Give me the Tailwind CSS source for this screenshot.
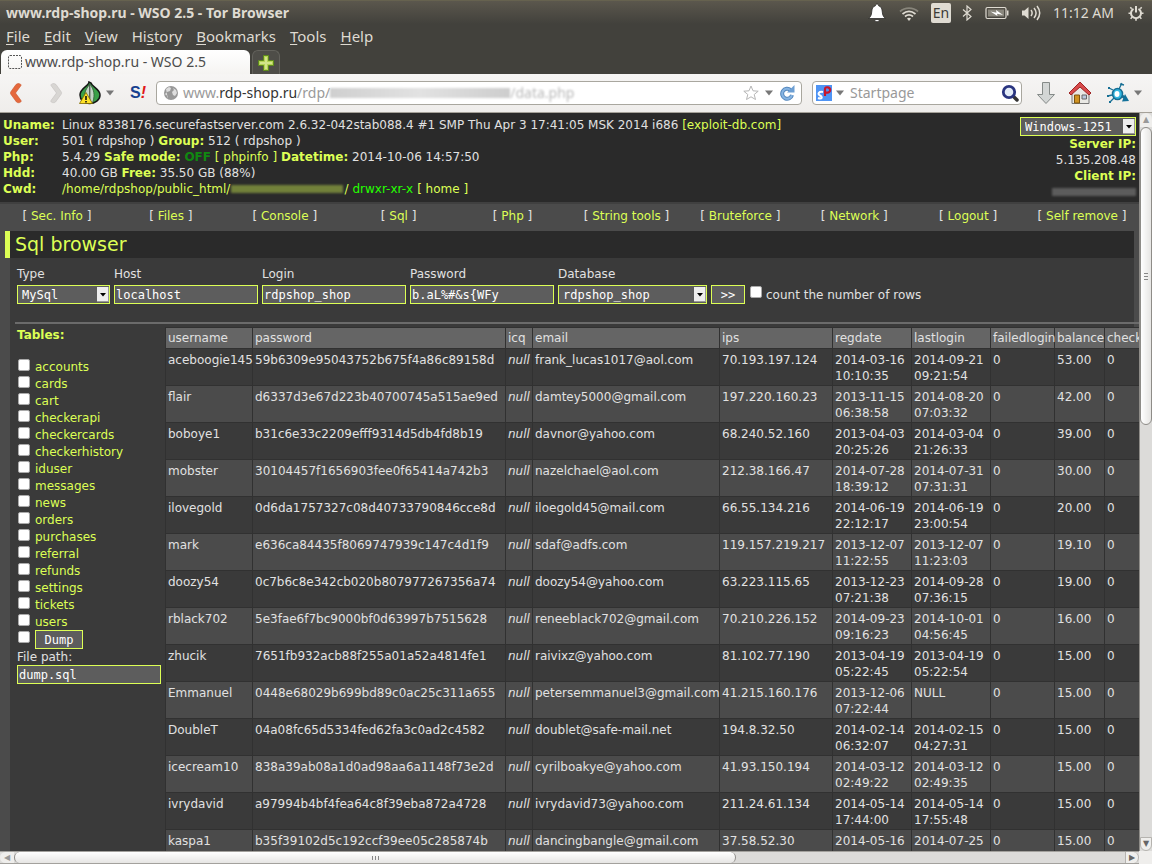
<!DOCTYPE html>
<html lang="en">

<head>
    <meta charset="UTF-8">
    <title>www.rdp-shop.ru - WSO 2.5</title>
    <meta name="viewport" content="width=device-width, initial-scale=1.0">
    <script src="https://cdn.jsdelivr.net/npm/@tailwindcss/browser@4"></script>
</head>

<body class="h-screen flex flex-col overflow-hidden bg-[#4b4b4b] font-['DejaVu_Sans',sans-serif] text-xs leading-4 text-[#e1e1e1]">

    <!-- Window title and system tray -->
    <header class="h-6 shrink-0 flex items-center justify-between pl-1.5 pr-2 border-t border-[#66624f] bg-linear-to-b from-[#5b574d] to-[#42413c] font-['Noto_Sans',sans-serif] text-sm text-[#dfdbd2]">
        <h1 class="font-bold">www.rdp-shop.ru - WSO 2.5 - Tor Browser</h1>
        <div class="flex items-center">
            <svg class="w-5 h-5 mr-3" viewBox="0 0 20 20"><path d="M10 1c1 0 1.500.8 1.500 1.700C14.500 3.500 15 6 15.300 9c.2 3 1 4.500 3 6.500H1.700c2-2 2.800-3.500 3-6.500C5 6 5.500 3.500 8.500 2.700 8.500 1.800 9 1 10 1zM7.500 16.500h5c-.5 3-4.500 3-5 0z" fill="#fff" stroke="#2c2b28" stroke-width=".8"/></svg>
            <svg class="w-5 h-5 mr-3" viewBox="0 0 20 20" fill="none" stroke-width="1.700"><path d="M1 8.500C6 4 14 4 19 8.500" stroke="#88857b"/><path d="M3.500 11c4-3.300 9-3.300 13 0M6 13.500c2.500-2 5.500-2 8 0" stroke="#dfdbd2"/><path d="M8 15.500c1-1 3-1 4 0l-2 2.500z" fill="#dfdbd2"/></svg>
            <span class="w-5 h-5 mr-2.5 rounded-xs bg-[#dfdbd2] text-[#3c3b37] text-sm leading-5 text-center">En</span>
            <svg class="w-3 h-4 mr-3" viewBox="0 0 12 16" fill="none" stroke="#dfdbd2" stroke-width="1.200"><path d="M2 4.500l8 7L6 15V1l4 3.500-8 7"/></svg>
            <svg class="w-6 h-4 mr-3" viewBox="0 0 24 16"><rect x="1" y="2.500" width="20" height="11" rx="1.500" fill="none" stroke="#dfdbd2" stroke-width="1.200"/><path d="M22 5.500h1.500v5H22z" fill="#dfdbd2"/><path d="M3 4.500h16v7H3z" fill="#8a877d"/><path d="M5.500 6.500l6 1.200-.5-2.700 7 5-6-1.200.5 2.200z" fill="#fff"/></svg>
            <svg class="w-5 h-4 mr-3" viewBox="0 0 20 16" fill="none" stroke="#dfdbd2" stroke-width="1.500"><path d="M1 5.500h2.500L7.500 2v12l-4-3.500H1z" fill="#dfdbd2" stroke="none"/><path d="M10 5c1.500 2 1.500 4 0 6M13 3c2.500 3 2.500 7 0 10M16 1c3.500 4.500 3.500 9.500 0 14"/></svg>
            <time class="mr-3.5">11:12 AM</time>
            <svg class="w-4 h-4" viewBox="0 0 16 16" fill="none" stroke="#dfdbd2"><path d="M5.500 3.800a5 5 0 1 0 5 0M8 1v6.500" stroke-width="2"/><path d="M3.700 3.700L2.300 2.300M12.300 3.700l1.400-1.400M3 8.200H.5M13 8.200h2.500M4.300 12l-1.700 1.700M11.700 12l1.700 1.700M8 13v2.800" stroke-width="1.600"/></svg>
        </div>
    </header>

    <nav class="h-[26px] shrink-0 flex items-center gap-3.5 px-1.5 pb-0.5 bg-[#42413c] font-['Noto_Sans',sans-serif] text-[15px] text-[#dfdbd2]">
        <a href="#"><u class="underline-offset-2">F</u>ile</a>
        <a href="#"><u class="underline-offset-2">E</u>dit</a>
        <a href="#"><u class="underline-offset-2">V</u>iew</a>
        <a href="#">Hi<u class="underline-offset-2">s</u>tory</a>
        <a href="#"><u class="underline-offset-2">B</u>ookmarks</a>
        <a href="#"><u class="underline-offset-2">T</u>ools</a>
        <a href="#"><u class="underline-offset-2">H</u>elp</a>
    </nav>

    <!-- Tabs -->
    <div class="h-6 shrink-0 flex gap-0.5 pl-px bg-[#42413c] font-['Noto_Sans',sans-serif] text-sm">
        <div class="w-[249px] flex items-center gap-0.5 pl-1.5 rounded-t-md bg-linear-to-b from-white to-[#f5f4f2] text-[#4c4c4c]">
            <svg class="w-4 h-4" viewBox="0 0 16 16" fill="none" stroke="#555"><rect x="1.500" y="1.500" width="13" height="13" rx="1.500" stroke-dasharray="2 1"/></svg>
            <span>www.rdp-shop.ru - WSO 2.5</span>
        </div>
        <button aria-label="New tab" class="w-7 flex items-center justify-center rounded-t-md border border-b-0 border-[#63625c] bg-[#4e4d48]">
            <svg class="w-4 h-4" viewBox="0 0 16 16"><path d="M5.500 .5h5v5h5v5h-5v5h-5v-5h-5v-5h5z" fill="#b5d354" stroke="#5d8a1c"/><path d="M7 2h2v5h5v2H9v5H7V9H2V7h5z" fill="#d2e58a"/></svg>
        </button>
    </div>

    <!-- Toolbar -->
    <div class="h-[39px] shrink-0 flex items-center pl-2 pr-2 border-b border-[#a5a199] bg-linear-to-b from-[#f6f5f4] to-[#efedeb] font-['Noto_Sans',sans-serif] text-sm">
        <button aria-label="Back"><svg class="w-4 h-6" viewBox="0 0 16 24"><path d="M10 2.500c2 0 3.500 1 3 2L7.500 12l5.500 7.500c1 2-3 3-4.500 1.500L3 13.500c-.7-1-.7-2 0-3L8 3.500z" fill="#e5683c" stroke="#c85228" stroke-width=".6"/></svg></button>
        <button aria-label="Forward" class="ml-6"><svg class="w-4 h-6" viewBox="0 0 16 24"><path d="M6 2.500c-2 0-3.500 1-3 2L8.500 12 3 19.500c-1 2 3 3 4.500 1.500l5.500-7.500c.7-1 .7-2 0-3L8 3.500z" fill="#d8d6d3" stroke="#c2c0bd" stroke-width=".6"/></svg></button>
        <button aria-label="Torbutton" class="ml-3.5 flex items-center gap-1">
            <svg class="w-6 h-6" viewBox="0 0 24 24"><path d="M11 1c0 4-9 6-9 13 0 5 4 8.500 9.500 8.500S22 19 22 14c0-6-8-8-9-12z" fill="#3aa048" stroke="#151515" stroke-width="1.500"/><path d="M12 3c-5 6-6 9-5 18 3 1 7 1 8 0 2-8 1-12-3-18z" fill="#c3d4c4" stroke="#2b5c30" stroke-width=".8"/><path d="M11.800 4v18" stroke="#333"/><path d="M8 11.500L1.500 22.500h13z" fill="#ffe228" stroke="#7d6800" stroke-width=".8"/><path d="M8 15v4M8 20v1.500" stroke="#111" stroke-width="1.600"/></svg>
            <svg class="w-2 h-2" viewBox="0 0 8 8"><path d="M0 1.500h8L4 6.500z" fill="#777"/></svg>
        </button>
        <button class="ml-4 w-4 h-4 font-['Liberation_Sans',sans-serif] font-bold text-base leading-4 text-[#17408f]"><span class="flex">S<span class="italic text-[#e01818]">!</span></span></button>

        <div class="ml-2.5 w-[646px] min-w-0 h-6 flex items-center px-1.5 rounded-sm border border-[#a9a79f] bg-white">
            <svg class="w-4 h-4 shrink-0" viewBox="0 0 16 16"><circle cx="8" cy="8" r="7" fill="#989898"/><path d="M3 4l3-2 2 1-1 3-3 1-2 2 1 1 2 1v3M10 3l3 2 1 3-2 3-2-1-1-3 2-2z" fill="#dedede"/></svg>
            <div class="ml-1 flex-1 flex items-center text-[#9a9a9a] whitespace-nowrap">
                <input type="text" aria-label="Address" class="sr-only" value="www.rdp-shop.ru/rdp/">
                <span>www.<span class="text-[#333]">rdp-shop.ru</span>/rdp/</span>
                <span class="w-[180px] h-2.5 blur-[1px] bg-linear-to-r from-[#cfcfcf] via-[#e2e2e2] to-[#cdcdcd]"></span>
                <span class="blur-[1px] text-[#b9b9b9]">/data.php</span>
            </div>
            <svg class="w-4 h-4" viewBox="0 0 16 16"><path d="M8 1l2 4.800 5.200.4-4 3.300 1.300 5L8 11.800 3.500 14.500l1.300-5-4-3.300 5.200-.4z" fill="#fff" stroke="#b6b6b6"/></svg>
            <svg class="w-2 h-2 ml-1.5 mr-1.5" viewBox="0 0 8 8"><path d="M0 1.500h8L4 6.500z" fill="#777"/></svg>
            <svg class="w-4 h-4" viewBox="0 0 16 16" fill="none"><path d="M11.500 5A5 5 0 1 0 13 10" stroke="#5588bd" stroke-width="4"/><path d="M11.500 5A5 5 0 1 0 13 10" stroke="#86b4e2" stroke-width="2"/><path d="M15.500 0v7.500H8z" fill="#6d9fd3"/></svg>
        </div>

        <form class="ml-2.5 w-[210px] h-6 flex items-center pl-[3px] pr-0.5 rounded-sm border border-[#a9a79f] bg-white">
            <svg class="w-4 h-4 shrink-0" viewBox="0 0 16 16"><rect width="16" height="16" fill="#4f94f4"/><path d="M7 7C3 6 1 9 4 10.500s2 4-2 2.500" fill="none" stroke="#fff" stroke-width="2"/><path d="M9 11V4c0-3 6-2 5 2-1 2-3 2-5 1" fill="none" stroke="#c8152c" stroke-width="2.200"/></svg>
            <svg class="w-2 h-2 ml-1 mr-1.5 shrink-0" viewBox="0 0 8 8"><path d="M0 1.500h8L4 6.500z" fill="#777"/></svg>
            <input type="text" aria-label="Search" placeholder="Startpage" class="flex-1 min-w-0 outline-none placeholder:text-[#999]">
            <button aria-label="Go"><svg class="w-[18px] h-[18px]" viewBox="0 0 18 18"><path d="M12 12l4 4" stroke="#333" stroke-width="3.500" stroke-linecap="round"/><circle cx="8" cy="8" r="5.700" fill="#e3ecf8" stroke="#2a3580" stroke-width="2.800"/></svg></button>
        </form>
        <svg class="w-5 h-6 ml-3.5" viewBox="0 0 20 24"><path d="M6.500 1.500h7v12h5L10 22.500 1.500 13.500h5z" fill="#d3d6d5" stroke="#858a88"/></svg>
        <svg class="w-6 h-6 ml-3" viewBox="0 0 24 24"><path d="M4 11v11.500h17V11l-8-7z" fill="#e9e8e4" stroke="#777"/><path d="M6.500 14h5v8h-5z" fill="#d09322" stroke="#7c5410"/><path d="M14 14h4.500v4H14z" fill="#bac9dd" stroke="#666"/><path d="M1 12L12 1l11 11-2 2-9-8-9 8z" fill="#d84b4b" stroke="#9e2525"/></svg>
        <svg class="w-6 h-6 ml-3.5" viewBox="0 0 24 24" fill="none" stroke="#176f94" stroke-width="1.300"><path d="M7 9L3 7M6 14l-4 1M8 17l-4 4M13 8l3-6M14 3l4 1"/><path d="M2 6h2v2H2zM1 14h2v2H1zM3 20h2v2H3z" fill="#176f94" stroke="none"/><ellipse cx="11.500" cy="13" rx="5" ry="5.500" fill="#33b6e0" stroke-width="1.500"/><ellipse cx="11" cy="13" rx="2.500" ry="3" fill="#fff" stroke="none"/><path d="M16 15l2.500 1.500" stroke-width="3"/><path d="M19 13l4 7-7 .5z" fill="#13719a" stroke="none"/></svg>
        <svg class="w-2 h-2 ml-1" viewBox="0 0 8 8"><path d="M0 1.500h8L4 6.500z" fill="#777"/></svg>
    </div>

    <div class="flex-1 min-h-0 flex">
        <main class="flex-1 min-w-0 flex flex-col overflow-hidden">

            <!-- Server info -->
            <section class="shrink-0 flex justify-between px-[3px] pt-1 pb-[5px] border-b-2 border-[#404040] bg-[#2a2a2a]">
                <dl class="grid grid-cols-[59px_auto] content-start [&>dt]:font-bold [&>dt]:text-[#ddff55] [&_b]:text-[#ddff55] [&_a]:text-[#ddff55]">
                    <dt>Uname:</dt>
                    <dd>Linux 8338176.securefastserver.com 2.6.32-042stab088.4 #1 SMP Thu Apr 3 17:41:05 MSK 2014 i686 <a href="#">[exploit-db.com]</a></dd>
                    <dt>User:</dt>
                    <dd>501 ( rdpshop ) <b>Group:</b> 512 ( rdpshop )</dd>
                    <dt>Php:</dt>
                    <dd>5.4.29 <b>Safe mode:</b> <strong class="text-[#118811]">OFF</strong> <a href="#">[ phpinfo ]</a> <b>Datetime:</b> 2014-10-06 14:57:50</dd>
                    <dt>Hdd:</dt>
                    <dd>40.00 GB <b>Free:</b> 35.50 GB (88%)</dd>
                    <dt>Cwd:</dt>
                    <dd class="flex items-center"><a href="#">/home/rdpshop/public_html/</a><span class="w-28 h-2 mx-px blur-[1px] bg-[#71803a]"></span><a href="#">/</a><span class="mx-1 text-[#25ff00]">drwxr-xr-x</span><a href="#">[ home ]</a></dd>
                </dl>
                <div class="flex flex-col items-end">
                    <div class="relative">
                        <select aria-label="Charset" class="appearance-none block w-[116px] h-[19px] pl-1 border border-[#ddff55] bg-[#5d5d5d] text-white font-['DejaVu_Sans_Mono',monospace] text-xs leading-4">
                            <option>Windows-1251</option>
                        </select>
                        <svg class="absolute right-px top-0.5 w-3 h-[15px] pointer-events-none" viewBox="0 0 12 15"><path d="M0 0h12v15H0z" fill="#eee"/><path d="M11 0h1v15H0v-1h11z" fill="#999"/><path d="M3 6h6L6 9.500z" fill="#000"/></svg>
                    </div>
                    <b class="text-[#ddff55]">Server IP:</b>
                    <span>5.135.208.48</span>
                    <b class="text-[#ddff55]">Client IP:</b>
                    <span class="w-[84px] h-2 mt-1 blur-[1px] bg-[#5c5c5c]"></span>
                </div>
            </section>

            <nav class="shrink-0 grid grid-cols-10 h-[27px] pt-1 text-center whitespace-nowrap [&_a]:text-[#ddff55]">
                <span>[ <a href="#">Sec. Info</a> ]</span>
                <span>[ <a href="#">Files</a> ]</span>
                <span>[ <a href="#">Console</a> ]</span>
                <span>[ <a href="#">Sql</a> ]</span>
                <span>[ <a href="#">Php</a> ]</span>
                <span>[ <a href="#">String tools</a> ]</span>
                <span>[ <a href="#">Bruteforce</a> ]</span>
                <span>[ <a href="#">Network</a> ]</span>
                <span>[ <a href="#">Logout</a> ]</span>
                <span>[ <a href="#">Self remove</a> ]</span>
            </nav>

            <h2 class="shrink-0 mx-[5px] h-[27px] pl-[5px] border-l-[5px] border-[#ddff55] bg-[#2a2a2a] text-[19px] leading-[27px] text-[#ddff55]">Sql browser</h2>

            <div class="flex-1 min-h-0 ml-2.5 mr-[5px] pl-[5px] bg-[#3a3a3a]">
                <!-- Connection -->
                <form class="flex items-end gap-1 h-[46px] pl-0.5 [&_input[type=text]]:block [&_input[type=text]]:w-36 [&_input[type=text]]:h-[19px] [&_input[type=text]]:pl-px [&_input[type=text]]:border [&_input[type=text]]:border-[#ddff55] [&_input[type=text]]:bg-[#5d5d5d] [&_input[type=text]]:text-white [&_input[type=text]]:font-['DejaVu_Sans_Mono',monospace]">
                    <label class="relative">
                        <span class="block mb-[3px]">Type</span>
                        <select class="appearance-none block w-[93px] h-[19px] pl-1 border border-[#ddff55] bg-[#5d5d5d] text-white font-['DejaVu_Sans_Mono',monospace] text-xs leading-4">
                            <option>MySql</option>
                        </select>
                        <svg class="absolute right-px bottom-0.5 w-3 h-[15px] pointer-events-none" viewBox="0 0 12 15"><path d="M0 0h12v15H0z" fill="#eee"/><path d="M11 0h1v15H0v-1h11z" fill="#999"/><path d="M3 6h6L6 9.500z" fill="#000"/></svg>
                    </label>
                    <label><span class="block mb-[3px]">Host</span><input type="text" value="localhost"></label>
                    <label><span class="block mb-[3px]">Login</span><input type="text" value="rdpshop_shop"></label>
                    <label><span class="block mb-[3px]">Password</span><input type="text" value="b.aL%#&amp;s{WFy"></label>
                    <label class="relative">
                        <span class="block mb-[3px]">Database</span>
                        <select class="appearance-none block w-[149px] h-[19px] pl-1 border border-[#ddff55] bg-[#5d5d5d] text-white font-['DejaVu_Sans_Mono',monospace] text-xs leading-4">
                            <option>rdpshop_shop</option>
                        </select>
                        <svg class="absolute right-px bottom-0.5 w-3 h-[15px] pointer-events-none" viewBox="0 0 12 15"><path d="M0 0h12v15H0z" fill="#eee"/><path d="M11 0h1v15H0v-1h11z" fill="#999"/><path d="M3 6h6L6 9.500z" fill="#000"/></svg>
                    </label>
                    <button type="button" class="w-[34px] h-[19px] border border-[#ddff55] bg-[#5d5d5d] text-white font-['DejaVu_Sans_Mono',monospace]">&gt;&gt;</button>
                    <label class="flex items-start gap-1 h-[19px] pl-px whitespace-nowrap">
                        <input type="checkbox" class="appearance-none mt-px w-3 h-3 rounded-xs border border-[#aaa] bg-white">
                        <span class="pt-0.5">count the number of rows</span>
                    </label>
                </form>

                <hr class="mt-[18px] h-0.5 -mr-[5px] border-0 bg-[#6b6b6b]">

                <div class="flex items-start pt-0.5">
                    <form class="w-[150px] shrink-0 pl-0.5">
                        <p class="pt-px font-bold text-[#ddff55]">Tables:</p>
                        <div id="tables" class="pt-[15px]"></div>
                        <div class="flex items-start gap-[5px] pl-px">
                            <input type="checkbox" aria-label="Select all" class="appearance-none mt-px w-3 h-3 rounded-xs border border-[#aaa] bg-white">
                            <button type="button" class="w-12 h-[19px] border border-[#ddff55] bg-[#5d5d5d] text-white font-['DejaVu_Sans_Mono',monospace]">Dump</button>
                        </div>
                        <label for="file-path" class="block">File path:</label>
                        <input id="file-path" type="text" value="dump.sql" class="block w-36 h-[19px] pl-px border border-[#ddff55] bg-[#5d5d5d] text-white font-['DejaVu_Sans_Mono',monospace]">
                    </form>

                    <table class="table-fixed shrink-0 mt-px w-[1029px] border-separate border-spacing-px bg-[#313131] text-left">
                        <colgroup>
                            <col class="w-[86px]">
                            <col class="w-[252px]">
                            <col class="w-[26px]">
                            <col class="w-[186px]">
                            <col class="w-[112px]">
                            <col class="w-[78px]">
                            <col class="w-[78px]">
                            <col class="w-[63px]">
                            <col class="w-[49px]">
                            <col>
                        </colgroup>
                        <thead>
                            <tr class="bg-[#656565] [&>th]:p-0.5 [&>th]:font-normal">
                                <th>username</th>
                                <th>password</th>
                                <th>icq</th>
                                <th>email</th>
                                <th>ips</th>
                                <th>regdate</th>
                                <th>lastlogin</th>
                                <th>failedlogin</th>
                                <th>balance</th>
                                <th>check</th>
                            </tr>
                        </thead>
                        <tbody id="rows"></tbody>
                    </table>
                </div>
            </div>
        </main>

        <!-- Vertical scrollbar -->
        <div class="w-[13px] shrink-0 flex flex-col border-l border-[#8e8c88] bg-[#dcdbd9]">
            <span class="h-3.5 rounded-t-full bg-[#efeeec] text-[8px] leading-[14px] text-center text-[#999]">▲</span>
            <div class="flex-1 min-h-0">
                <div class="h-[42%] flex flex-col items-center justify-center gap-0.5 rounded-full border border-[#8e8c88] bg-linear-to-r from-white to-[#e6e5e3]">
                    <i class="w-1 h-px bg-[#888]"></i><i class="w-1 h-px bg-[#888]"></i><i class="w-1 h-px bg-[#888]"></i>
                </div>
            </div>
            <span class="h-3.5 rounded-b-full border border-[#b5b3af] bg-[#efeeec] text-[8px] leading-3 text-center text-[#666]">▼</span>
        </div>
    </div>

    <!-- Horizontal scrollbar -->
    <div class="shrink-0 pr-[13px] bg-[#efeeec]">
        <div class="h-[13px] flex border-y border-[#a3a19d] bg-[#dcdbd9]">
            <span class="w-3.5 rounded-l-full bg-[#efeeec] text-[8px] leading-[11px] text-center text-[#999]">◀</span>
            <div class="flex-1">
                <div class="w-[65%] h-full flex items-center justify-center gap-0.5 rounded-full border-x border-[#8e8c88] bg-linear-to-b from-white to-[#e6e5e3]">
                    <i class="w-px h-1 bg-[#888]"></i><i class="w-px h-1 bg-[#888]"></i><i class="w-px h-1 bg-[#888]"></i>
                </div>
            </div>
            <span class="w-3.5 rounded-r-full border-x border-[#b5b3af] bg-[#efeeec] text-[8px] leading-[11px] text-center text-[#666]">▶</span>
        </div>
    </div>

    <script>
        const tables = ['accounts', 'cards', 'cart', 'checkerapi', 'checkercards', 'checkerhistory', 'iduser', 'messages',
            'news', 'orders', 'purchases', 'referral', 'refunds', 'settings', 'tickets', 'users'];

        // username, password, email, ips, regdate, lastlogin, balance
        const rows = [
            ['aceboogie145', '59b6309e95043752b675f4a86c89158d', 'frank_lucas1017@aol.com', '70.193.197.124', '2014-03-16 10:10:35', '2014-09-21 09:21:54', '53.00'],
            ['flair', 'd6337d3e67d223b40700745a515ae9ed', 'damtey5000@gmail.com', '197.220.160.23', '2013-11-15 06:38:58', '2014-08-20 07:03:32', '42.00'],
            ['boboye1', 'b31c6e33c2209efff9314d5db4fd8b19', 'davnor@yahoo.com', '68.240.52.160', '2013-04-03 20:25:26', '2014-03-04 21:26:33', '39.00'],
            ['mobster', '30104457f1656903fee0f65414a742b3', 'nazelchael@aol.com', '212.38.166.47', '2014-07-28 18:39:12', '2014-07-31 07:31:31', '30.00'],
            ['ilovegold', '0d6da1757327c08d40733790846cce8d', 'iloegold45@mail.com', '66.55.134.216', '2014-06-19 22:12:17', '2014-06-19 23:00:54', '20.00'],
            ['mark', 'e636ca84435f8069747939c147c4d1f9', 'sdaf@adfs.com', '119.157.219.217', '2013-12-07 11:22:55', '2013-12-07 11:23:03', '19.10'],
            ['doozy54', '0c7b6c8e342cb020b807977267356a74', 'doozy54@yahoo.com', '63.223.115.65', '2013-12-23 07:21:38', '2014-09-28 07:36:15', '19.00'],
            ['rblack702', '5e3fae6f7bc9000bf0d63997b7515628', 'reneeblack702@gmail.com', '70.210.226.152', '2014-09-23 09:16:23', '2014-10-01 04:56:45', '16.00'],
            ['zhucik', '7651fb932acb88f255a01a52a4814fe1', 'raivixz@yahoo.com', '81.102.77.190', '2013-04-19 05:22:45', '2013-04-19 05:22:54', '15.00'],
            ['Emmanuel', '0448e68029b699bd89c0ac25c311a655', 'petersemmanuel3@gmail.com', '41.215.160.176', '2013-12-06 07:22:44', 'NULL', '15.00'],
            ['DoubleT', '04a08fc65d5334fed62fa3c0ad2c4582', 'doublet@safe-mail.net', '194.8.32.50', '2014-02-14 06:32:07', '2014-02-15 04:27:31', '15.00'],
            ['icecream10', '838a39ab08a1d0ad98aa6a1148f73e2d', 'cyrilboakye@yahoo.com', '41.93.150.194', '2014-03-12 02:49:22', '2014-03-12 02:49:35', '15.00'],
            ['ivrydavid', 'a97994b4bf4fea64c8f39eba872a4728', 'ivrydavid73@yahoo.com', '211.24.61.134', '2014-05-14 17:44:00', '2014-05-14 17:55:48', '15.00'],
            ['kaspa1', 'b35f39102d5c192ccf39ee05c285874b', 'dancingbangle@gmail.com', '37.58.52.30', '2014-05-16', '2014-07-25', '15.00'],
        ];

        document.getElementById('tables').innerHTML = tables.map(name => `
            <div class="flex items-start gap-[5px] h-[17px] pl-px">
                <input type="checkbox" id="t-${name}" class="appearance-none mt-px w-3 h-3 rounded-xs border border-[#aaa] bg-white">
                <label for="t-${name}" class="pt-px text-[#ddff55]">${name}</label>
            </div>`).join('');

        document.getElementById('rows').innerHTML = rows.map(r => {
            const cells = [r[0], r[1], '<i>null</i>', r[2], r[3], r[4], r[5], '0', r[6], '0'];
            return `<tr class="h-9 bg-[#3a3a3a] even:bg-[#4b4b4b] align-top">${cells.map(c => `<td class="px-0.5 pt-[3px] pb-px">${c}</td>`).join('')}</tr>`;
        }).join('');
    </script>
</body>

</html>
